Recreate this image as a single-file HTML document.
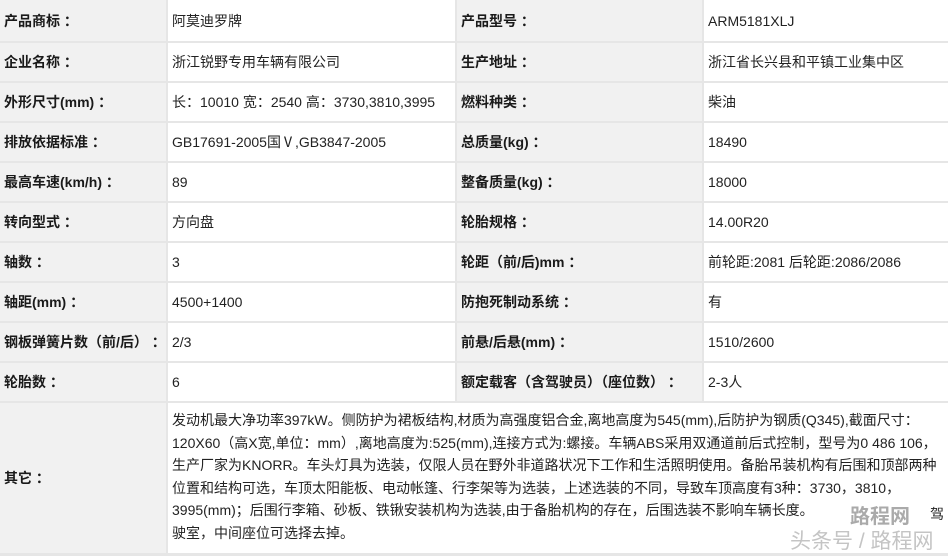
<!DOCTYPE html>
<html><head><meta charset="utf-8"><style>
*{margin:0;padding:0;box-sizing:border-box}
body{width:948px;height:556px;background:#e6e6e6;position:relative;overflow:hidden;font-family:"Liberation Sans","Noto Sans CJK SC",sans-serif;font-size:14px;color:#222}
.c{position:absolute;display:flex;align-items:center;white-space:nowrap}
.l{background:#f1f1f1;font-weight:bold;padding-left:4px;color:#1a1a1a}
.v{background:#fff;padding-left:4px}
.big{position:absolute;left:168px;top:403px;width:780px;height:150px;background:#fff;padding:6px 0 0 4px;line-height:22.6px;white-space:nowrap;font-size:14px}
.wm{position:absolute;color:#bbb;font-size:20px}
</style></head><body>
<div id="t"></div>
<script>
var rows=[
["产品商标 ：","阿莫迪罗牌","产品型号 ：","ARM5181XLJ"],
["企业名称 ：","浙江锐野专用车辆有限公司","生产地址 ：","浙江省长兴县和平镇工业集中区"],
["外形尺寸(mm) ：","长：10010 宽：2540 高：3730,3810,3995","燃料种类 ：","柴油"],
["排放依据标准 ：","GB17691-2005国Ⅴ,GB3847-2005","总质量(kg) ：","18490"],
["最高车速(km/h) ：","89","整备质量(kg) ：","18000"],
["转向型式 ：","方向盘","轮胎规格 ：","14.00R20"],
["轴数 ：","3","轮距（前/后)mm ：","前轮距:2081 后轮距:2086/2086"],
["轴距(mm) ：","4500+1400","防抱死制动系统 ：","有"],
["钢板弹簧片数（前/后） ：","2/3","前悬/后悬(mm) ：","1510/2600"],
["轮胎数 ：","6","额定载客（含驾驶员）（座位数） ：","2-3人"]];
var h='';
rows.forEach(function(r,i){
var top=i==0?0:43+(i-1)*40, ht=i==0?41:38;
h+='<div class="c l" style="left:0;top:'+top+'px;width:166px;height:'+ht+'px">'+r[0]+'</div>';
h+='<div class="c v" style="left:168px;top:'+top+'px;width:287px;height:'+ht+'px">'+r[1]+'</div>';
h+='<div class="c l" style="left:457px;top:'+top+'px;width:245px;height:'+ht+'px">'+r[2]+'</div>';
h+='<div class="c v" style="left:704px;top:'+top+'px;width:244px;height:'+ht+'px">'+r[3]+'</div>';
});
document.getElementById('t').innerHTML=h;
</script>
<div class="c l" style="left:0;top:403px;width:166px;height:150px">其它 ：</div>
<div class="big">发动机最大净功率397kW。侧防护为裙板结构,材质为高强度铝合金,离地高度为545(mm),后防护为钢质(Q345),截面尺寸：<br>120X60（高X宽,单位：mm）,离地高度为:525(mm),连接方式为:螺接。车辆ABS采用双通道前后式控制，型号为0 486 106，<br>生产厂家为KNORR。车头灯具为选装，仅限人员在野外非道路状况下工作和生活照明使用。备胎吊装机构有后围和顶部两种<br>位置和结构可选，车顶太阳能板、电动帐篷、行李架等为选装，上述选装的不同，导致车顶高度有3种：3730，3810，<br>3995(mm)；后围行李箱、砂板、铁锹安装机构为选装,由于备胎机构的存在，后围选装不影响车辆长度。<br>驶室，中间座位可选择去掉。</div>
<div style="position:absolute;left:930px;top:504px;font-size:14px">驾</div>
<div class="wm" style="left:850px;top:500px;font-weight:bold;color:#aaa">路程网</div>
<div class="wm" style="left:790px;top:525px;font-size:21px;color:#c4c4c4">头条号 / 路程网</div>
</body></html>
